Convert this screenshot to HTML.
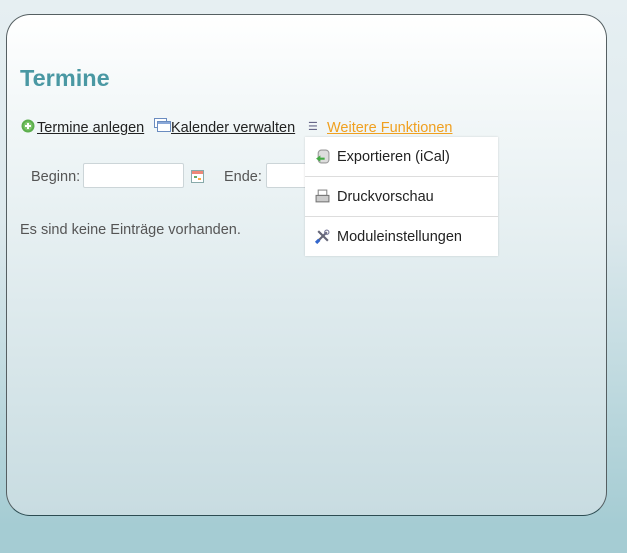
<!DOCTYPE html>
<html><head><style>
html,body{margin:0;padding:0}
body{width:627px;height:553px;overflow:hidden;background:linear-gradient(#e6eff2,#dde9ed 40%,#a5ccd3 95%);font-family:"Liberation Sans",sans-serif;position:relative}
.panel{position:absolute;left:6px;top:14px;width:599px;height:500px;border:1px solid #555f62;border-bottom-color:#2c4c52;border-radius:24px;background:linear-gradient(#ffffff,#f2f7f8 20%,#c8dce1)}
h1{position:absolute;left:20px;top:65px;margin:0;font-size:23.5px;color:#4a98a3;font-weight:bold}
.a{position:absolute;top:120px;font-size:14.5px;color:#222;text-decoration:underline}
.lbl{position:absolute;top:169px;font-size:14.5px;color:#555}
.inp{position:absolute;top:163px;height:23px;border:1px solid #ccd5d8;background:#fff;border-radius:2px}
.dd{position:absolute;left:305px;top:137px;width:193px;height:119px;background:#fff;box-shadow:0 0 2px rgba(0,0,0,.15)}
.it{height:39px;border-bottom:1px solid #ddd;font-size:14.5px;color:#222;line-height:41px;padding-left:32px;position:relative}
.it:last-child{border-bottom:none}
.ic{position:absolute;left:10px;top:12px;width:15px;height:15px}
</style></head><body>
<div class="panel"></div>
<h1>Termine</h1>
<svg style="position:absolute;left:21px;top:119px" width="14" height="14"><circle cx="7" cy="7" r="6.5" fill="#5cae4c"/><circle cx="7" cy="7" r="4.5" fill="#7cc56a"/><path d="M7 4v6M4 7h6" stroke="#fff" stroke-width="2"/></svg>
<div class="a" style="left:37px">Termine anlegen</div>
<svg style="position:absolute;left:154px;top:118px" width="17" height="14"><rect x="0.5" y="0.5" width="12" height="9" fill="#fff" stroke="#6a8cc0"/><rect x="3.5" y="3.5" width="13" height="10" fill="#fff" stroke="#6a8cc0"/><rect x="4" y="4" width="12" height="2" fill="#8aa8d8"/></svg>
<div class="a" style="left:171px">Kalender verwalten</div>
<div style="position:absolute;left:308px;top:120px;font-size:11px;color:#668">&#9776;</div>
<div class="a" style="left:327px;color:#f0a020">Weitere Funktionen</div>
<div class="lbl" style="left:31px">Beginn:</div>
<div class="inp" style="left:83px;width:99px"></div>
<svg style="position:absolute;left:191px;top:170px" width="13" height="13"><rect x="0.5" y="0.5" width="12" height="12" fill="#fff" stroke="#8aa"/><rect x="1" y="1" width="11" height="3" fill="#e87"/><rect x="3" y="6" width="3" height="2" fill="#6a6"/><rect x="7" y="8" width="3" height="2" fill="#fa4"/></svg>
<div class="lbl" style="left:224px">Ende:</div>
<div class="inp" style="left:266px;width:50px"></div>
<div style="position:absolute;left:20px;top:222px;font-size:14.5px;color:#555">Es sind keine Einträge vorhanden.</div>
<div class="dd">
<div class="it"><svg class="ic" viewBox="0 0 14 14"><rect x="3" y="1" width="10" height="12" rx="3" fill="#ddd" stroke="#999"/><path d="M1 9l4-3v2h4v2H5v2z" fill="#4a4"/></svg>Exportieren (iCal)</div>
<div class="it"><svg class="ic" viewBox="0 0 14 14"><rect x="3" y="1" width="8" height="5" fill="#fff" stroke="#888"/><rect x="1" y="6" width="12" height="6" fill="#ccc" stroke="#777"/></svg>Druckvorschau</div>
<div class="it"><svg class="ic" viewBox="0 0 14 14"><path d="M3 11l8-8M3 2l9 9" stroke="#667" stroke-width="2"/><circle cx="11" cy="3" r="2" fill="none" stroke="#779"/><path d="M1 13l3-3" stroke="#36c" stroke-width="3"/></svg>Moduleinstellungen</div>
</div>
</body></html>
